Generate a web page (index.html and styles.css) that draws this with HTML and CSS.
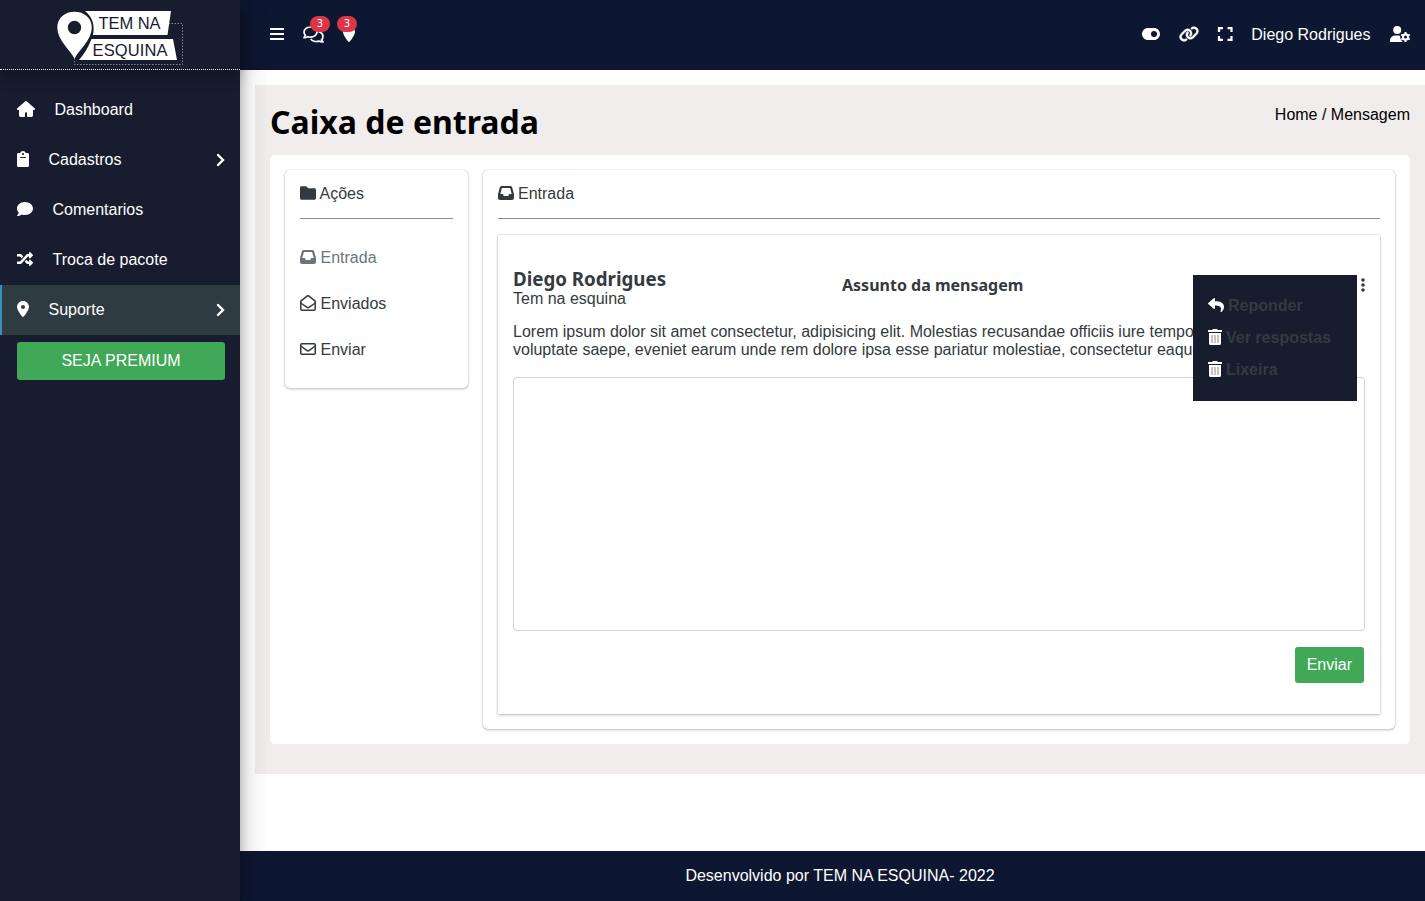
FILE: index.html
```html
<!DOCTYPE html>
<html lang="pt-br">
<head>
<meta charset="utf-8">
<title>Caixa de entrada</title>
<link rel="stylesheet" href="styles.css">
</head>
<body>
<aside class="sidebar">
  <a class="brand">
    <svg class="logo" width="240" height="69" viewBox="0 0 240 69">
      <path d="M74.500 58V64.500H182.500V23.500H169" fill="none" stroke="#82858f" stroke-width="1" stroke-dasharray="1.500 1.500"/>
      <path d="M85 11H171L167.500 35H93Q96 20 85 11ZM91.500 39H173L177 60H79Q87 51 91.500 39Z" fill="#fff"/>
      <path d="M74.500 58.500C70 50 57.300 40 57.300 27.500C57.300 18 65 11.800 74.500 11.800S91.800 18 91.800 27.500C91.800 40 79 50 74.500 58.500Z" fill="#fff"/>
      <circle cx="74.500" cy="27.500" r="6.700" fill="#171c2f"/>
      <text x="98.500" y="29" class="logo-text" textLength="62">TEM NA</text>
      <text x="92.500" y="56" class="logo-text" textLength="75">ESQUINA</text>
    </svg>
  </a>
  <nav class="menu">
    <a class="item"><svg height="16" width="18" viewBox="0 0 576 512"><path d="M575.800 255.500c0 18-15 32.100-32 32.100h-32l.7 160.200c0 35.300-21.500 64.200-56.700 64.200H352c-17.700 0-32-14.300-32-32v-88c0-17.700-14.300-32-32-32s-32 14.300-32 32v88c0 17.700-14.300 32-32 32H120c-35 0-56-24-56-56V287.600H32c-18 0-32-14-32-32.100 0-9 3-17 10-24L266.400 8c7-7 15-8 22-8s15 2 21 7l255.400 224.500c8 7 12 15 11 24z"/></svg><span>Dashboard</span></a>
    <a class="item"><svg height="16" width="12" viewBox="0 0 384 512"><path fill-rule="evenodd" d="M336 64h-53.900C270 27 235 0 192 0s-77 27-90 64H48C21.500 64 0 85.500 0 112v352c0 26.500 21.500 48 48 48h288c26.500 0 48-21.500 48-48V112c0-26.500-21.500-48-48-48zM192 64c18 0 32 14 32 32s-14 32-32 32-32-14-32-32 14-32 32-32zm80 160H112c-9 0-16-7-16-16s7-16 16-16h160c9 0 16 7 16 16s-7 16-16 16z"/></svg><span>Cadastros</span><svg class="chevron" width="10" height="16" viewBox="0 0 10 16"><path d="M2 3l5 5-5 5"/></svg></a>
    <a class="item"><svg height="16" width="16" viewBox="0 0 512 512"><path d="M256 32C114.600 32 0 125.100 0 240c0 49.600 21.400 95 57 130.700C44.500 421.100 2.700 466 2.200 466.500c-2.200 2.300-2.800 5.700-1.500 8.700S4.800 480 8 480c66.300 0 116-31.800 140.600-51.400 32.700 12.300 69 19.400 107.400 19.400 141.400 0 256-93.100 256-208S397.400 32 256 32z"/></svg><span>Comentarios</span></a>
    <a class="item"><svg height="16" width="16" viewBox="0 0 512 512"><path d="M504.971 359.029c9.373 9.373 9.373 24.569 0 33.941l-80 79.984c-15.010 15.010-40.971 4.490-40.971-16.971V416h-58.785a12.004 12.004 0 0 1-8.773-3.812l-70.556-75.596 53.333-57.143L352 336h32v-39.981c0-21.438 25.943-31.998 40.971-16.971l80 79.981zM12 176h84l52.781 56.551 53.333-57.143-70.556-75.596A11.999 11.999 0 0 0 122.785 96H12c-6.627 0-12 5.373-12 12v56c0 6.627 5.373 12 12 12zm372 0v39.984c0 21.460 25.961 31.980 40.971 16.971l80-79.984c9.373-9.373 9.373-24.569 0-33.941l-80-79.981C409.943 24.021 384 34.582 384 56.019V96h-58.785a12.004 12.004 0 0 0-8.773 3.812L96 336H12c-6.627 0-12 5.373-12 12v56c0 6.627 5.373 12 12 12h110.785c3.326 0 6.503-1.381 8.773-3.812L352 176h32z"/></svg><span>Troca de pacote</span></a>
    <a class="item active"><svg height="16" width="12" viewBox="0 0 384 512"><path fill-rule="evenodd" d="M215.700 499.200C267 435 384 279.400 384 192 384 86 298 0 192 0S0 86 0 192c0 87.400 117 243 168.300 307.200 12.300 15.300 35.100 15.300 47.400 0zM192 128a64 64 0 1 1 0 128 64 64 0 1 1 0-128z"/></svg><span>Suporte</span><svg class="chevron" width="10" height="16" viewBox="0 0 10 16"><path d="M2 3l5 5-5 5"/></svg></a>
  </nav>
  <button class="btn premium">SEJA PREMIUM</button>
</aside>
<header class="topbar">
  <div class="group">
    <svg class="bars" width="14" height="16" viewBox="0 0 14 16"><path d="M0 3h14M0 8h14M0 13h14" stroke="#fff" stroke-width="2"/></svg>
    <span class="notify chat"><svg width="21" height="17" viewBox="0 0 21 17"><g fill="#0e1731" stroke="#fff" stroke-width="1.700" stroke-linejoin="round"><path d="M11.500 5.200c4.500-.8 8.500 1.800 8.500 5.200 0 1.400-.6 2.500-1.500 3.400l1.500 2.200c-1.600.1-3-.3-4-.9-3.300 1-7 .1-8.200-2.300"/><path d="M7.500 1C3.800 1 1 3.300 1 6.100c0 1.300.5 2.400 1.400 3.300L1 11.700c1.600 0 2.800-.4 3.800-1 .9.300 1.700.4 2.700.4 3.700 0 6.500-2.200 6.500-5S11.200 1 7.500 1z"/></g></svg><b class="badge">3</b></span>
    <span class="notify pin"><svg height="16" width="12" viewBox="0 0 384 512"><path fill="#fff" d="M215.700 499.200C267 435 384 279.400 384 192 384 86 298 0 192 0S0 86 0 192c0 87.400 117 243 168.300 307.200 12.300 15.300 35.100 15.300 47.400 0z"/></svg><b class="badge">3</b></span>
  </div>
  <div class="group right">
    <svg width="18" height="16" viewBox="0 0 576 512"><path fill="#fff" fill-rule="evenodd" d="M384 64H192C86 64 0 150 0 256s86 192 192 192h192c106 0 192-86 192-192S490 64 384 64zm0 288a96 96 0 1 1 0-192 96 96 0 1 1 0 192z"/></svg>
    <svg class="link" width="20" height="16" viewBox="0 0 640 512"><path fill="#fff" stroke="#fff" stroke-width="14" d="M579.800 267.700c56.500-56.500 56.500-148 0-204.500-50-50-128.800-56.500-186.300-15.400l-1.600 1.100c-14.400 10.300-17.700 30.300-7.400 44.600s30.300 17.700 44.600 7.400l1.600-1.100c32.100-22.900 76-19.300 103.800 8.600 31.500 31.500 31.500 82.500 0 114L422.300 334.800c-31.500 31.500-82.500 31.500-114 0-27.900-27.900-31.500-71.800-8.600-103.800l1.100-1.600c10.300-14.400 6.900-34.400-7.400-44.600s-34.400-6.900-44.600 7.400l-1.100 1.600C206.500 251.200 213 330 263 380c56.500 56.500 148 56.500 204.500 0L579.800 267.700zM60.200 244.300c-56.500 56.500-56.500 148 0 204.500 50 50 128.800 56.500 186.300 15.400l1.600-1.100c14.400-10.300 17.700-30.300 7.400-44.600s-30.300-17.700-44.600-7.400l-1.600 1.100c-32.100 22.900-76 19.300-103.800-8.600C74 372 74 321 105.500 289.500L217.700 177.200c31.500-31.500 82.500-31.500 114 0 27.900 27.900 31.500 71.800 8.600 103.900l-1.100 1.600c-10.300 14.400-6.900 34.400 7.400 44.600s34.400 6.900 44.600-7.400l1.100-1.600C433.500 260.800 427 182 377 132c-56.500-56.500-148-56.500-204.500 0L60.200 244.300z"/></svg>
    <svg class="expand" width="16" height="16" viewBox="0 0 16 16"><path fill="none" stroke="#fff" stroke-width="2.200" d="M2 6V2.100h4M10.500 2.100h4V6M2 10v3.900h4M10.500 13.900h4V10"/></svg>
    <span class="user">Diego Rodrigues</span>
    <svg class="gear" width="21" height="16" viewBox="0 0 21 16"><circle cx="7.200" cy="4" r="4" fill="#fff"/><path fill="#fff" d="M0 16v-1.500C0 11.500 2.500 9.500 5.500 9.500h3.300c.8 0 1.500.2 2.200.5 0 2.500.5 4.500 2 6z"/><circle cx="15.500" cy="11" r="5.400" fill="#0e1731"/><circle cx="15.500" cy="11" r="2.600" fill="none" stroke="#fff" stroke-width="2.200"/><path stroke="#fff" stroke-width="2" d="M15.500 6v2M15.500 14v2M11.200 8.500l1.700 1M18.100 12.500l1.700 1M11.200 13.500l1.700-1M18.100 9.500l1.700-1"/></svg>
  </div>
</header>
<main class="content">
  <section class="page">
    <div class="page-head"><h1>Caixa de entrada</h1><div class="crumbs">Home / Mensagem</div></div>
    <div class="panel">
      <div class="card actions">
        <div class="card-title"><svg width="16" height="16" viewBox="0 0 16 16"><path d="M1.500 1.200h4.700l2 2h6.300c.8 0 1.500.7 1.500 1.500v8.600c0 .8-.7 1.500-1.500 1.500h-13C.700 14.800 0 14.100 0 13.300V2.700c0-.8.7-1.500 1.500-1.500z"/></svg><span>Ações</span></div>
        <ul class="folders">
          <li class="current"><svg width="16" height="16" viewBox="0 0 16 16"><path fill-rule="evenodd" d="M3.700 1h8.600c.9 0 1.700.6 1.900 1.500L16 9.200V13c0 1.100-.9 2-2 2H2c-1.100 0-2-.9-2-2V9.200l1.800-6.700C2 1.600 2.800 1 3.700 1zm.2 2L2.300 9h2.500l1 2h4.400l1-2h2.500l-1.600-6z"/></svg><span>Entrada</span></li>
          <li><svg width="16" height="16" viewBox="0 0 16 16"><g fill="none" stroke="#343a40" stroke-width="1.500" stroke-linejoin="round"><path d="M.8 6.200L7 1.100c.6-.5 1.400-.5 2 0l6.200 5.100v8c0 .6-.4 1-1 1H1.800c-.6 0-1-.4-1-1z"/><path d="M.8 8l5.900 4.200c.8.600 1.800.6 2.600 0L15.200 8"/></g></svg><span>Enviados</span></li>
          <li><svg width="16" height="16" viewBox="0 0 16 16"><g fill="none" stroke="#343a40" stroke-width="1.500"><rect x=".75" y="2.750" width="14.500" height="10.500" rx="1"/><path d="M.8 5l5.900 4.400c.8.600 1.800.6 2.600 0L15.200 5"/></g></svg><span>Enviar</span></li>
        </ul>
      </div>
      <div class="card inbox">
        <div class="card-title"><svg class="tray" width="16" height="16" viewBox="0 0 16 16"><path fill-rule="evenodd" d="M3.700 1h8.600c.9 0 1.700.6 1.900 1.500L16 9.200V13c0 1.100-.9 2-2 2H2c-1.100 0-2-.9-2-2V9.200l1.800-6.700C2 1.600 2.800 1 3.700 1zm.2 2L2.300 9h2.500l1 2h4.400l1-2h2.500l-1.600-6z"/></svg><span class="wide">Entrada</span></div>
        <article class="message">
          <div class="message-head">
            <div class="sender"><h2>Diego Rodrigues</h2><div>Tem na esquina</div></div>
            <h3>Assunto da mensagem</h3>
            <div class="more"><svg width="4" height="14" viewBox="0 0 4 14"><circle cx="2" cy="2" r="1.800"/><circle cx="2" cy="7" r="1.800"/><circle cx="2" cy="12" r="1.800"/></svg>
              <div class="dropdown">
                <a><svg width="16" height="16" viewBox="0 0 512 512"><path d="M8.300 189.800L184.300 37.900C199.700 24.500 224 35.300 224 56v80c160.600 1.800 288 34 288 186.300 0 61.400-39.600 122.300-83.300 154.100-13.700 9.900-33.100-2.500-28.100-18.600C445.900 312.800 379.100 274.300 224 272v88c0 20.700-24.300 31.500-39.700 18.200L8.300 226.200c-11.100-9.600-11.100-26.800 0-36.400z"/></svg><span>Reponder</span></a>
                <a><svg width="14" height="16" viewBox="0 0 14 16"><path d="M0 1h4l1-1h4l1 1h4v2H0z"/><path d="M1 4h12v10.500c0 .8-.7 1.500-1.500 1.500h-9C1.700 16 1 15.300 1 14.500z"/><path d="M4 6v8M7 6v8M10 6v8" stroke="#8f8a85"/></svg><span>Ver respostas</span></a>
                <a><svg width="14" height="16" viewBox="0 0 14 16"><path d="M0 1h4l1-1h4l1 1h4v2H0z"/><path d="M1 4h12v10.500c0 .8-.7 1.500-1.500 1.500h-9C1.700 16 1 15.300 1 14.500z"/><path d="M4 6v8M7 6v8M10 6v8" stroke="#8f8a85"/></svg><span>Lixeira</span></a>
              </div>
            </div>
          </div>
          <p>Lorem ipsum dolor sit amet consectetur, adipisicing elit. Molestias recusandae officiis iure tempore<br>voluptate saepe, eveniet earum unde rem dolore ipsa esse pariatur molestiae, consectetur eaque</p>
          <textarea></textarea>
          <div class="send"><button class="btn">Enviar</button></div>
        </article>
      </div>
    </div>
  </section>
</main>
<footer class="footer">Desenvolvido por TEM NA ESQUINA- 2022</footer>
</body>
</html>
```
FILE: styles.css
```css
* { box-sizing: border-box; }
body {
  margin: 0;
  height: 901px;
  display: grid;
  grid-template: 70px 1fr 50px / 240px 1fr;
  overflow: hidden;
  background: #fff;
  color: #343a40;
  font: 16px/18px "Liberation Sans", Arial, sans-serif;
}
svg { display: block; flex: none; }
h1, h2, h3, p, ul { margin: 0; padding: 0; }
.sidebar {
  grid-row: 1 / 4;
  position: relative;
  z-index: 2;
  background: #171c2f;
  color: #fff;
  box-shadow: 0 14px 28px rgba(0,0,0,.25), 0 10px 10px rgba(0,0,0,.22);
}
.brand {
  display: block;
  height: 70px;
  border-bottom: 1px dotted #fff;
  box-shadow: 0 8px 14px rgba(0,0,0,.22);
}
.logo-text { font-size: 16.5px; fill: #171c2f; }
.menu { padding-top: 15px; }
.item {
  display: flex;
  align-items: center;
  height: 50px;
  padding: 0 14px 0 14.5px;
  border-left: 2px solid transparent;
  fill: #fff;
}
.item > svg:first-child { margin-bottom: 2px; }
.item span { margin-left: 20px; }
.item.active { background: #2e3b41; border-color: #3c8dbc; }
.chevron { margin-left: auto; fill: none; stroke: #fff; stroke-width: 2.4; stroke-linecap: round; }
.btn {
  height: 36px;
  padding: 0 12px;
  border: 0;
  border-radius: 3px;
  background: #40a857;
  color: #fff;
  font: inherit;
}
.premium { display: block; width: 208px; height: 38px; margin: 7px 0 0 17px; }
.topbar {
  display: flex;
  justify-content: space-between;
  padding: 0 14.5px 2px 30px;
  background: #0e1731;
  color: #fff;
}
.group { display: flex; align-items: center; }
.notify { position: relative; }
.chat, .pin { margin-left: 19px; }
.badge {
  position: absolute;
  left: 7px;
  top: -10px;
  width: 20px;
  height: 16px;
  border-radius: 8px;
  background: #dc3545;
  font: 10px/16px "DejaVu Sans", sans-serif;
  text-align: center;
}
.chat .badge { top: -9.5px; }
.pin .badge { left: -6px; }
.link { margin-left: 19px; }
.expand { margin-left: 18.5px; }
.user { margin: 0 19px 0 18px; padding-top: 2px; }
.page { margin: 15px 0 0 15px; padding: 15px; height: 689px; background: #f1eded; }
.page-head { display: flex; justify-content: space-between; height: 55px; color: #000; }
h1 { font: bold 32px/44px "Noto Sans", sans-serif; }
.crumbs { padding-top: 6px; }
.panel {
  display: grid;
  grid-template-columns: 183px 1fr;
  align-items: start;
  gap: 15px;
  padding: 15px;
  height: 589px;
  border-radius: 5px;
  background: #fff;
}
.card {
  padding: 15px;
  border-radius: 5px;
  background: #fff;
  box-shadow: 0 0 1px rgba(0,0,0,.25), 0 1px 3px rgba(0,0,0,.25);
}
.actions { height: 218px; }
.inbox { height: 559px; }
.card-title {
  display: flex;
  align-items: center;
  height: 34px;
  padding-bottom: 16px;
  border-bottom: 1px solid #8d8d8d;
  fill: #343a40;
}
.card-title svg { margin-bottom: 2px; }
.card-title span { margin-left: 3.5px; }
.card-title .tray { margin-left: -.5px; }
.card-title .wide { margin-left: 4.5px; }
.folders { display: grid; gap: 28px; padding-top: 30px; list-style: none; }
.folders li { display: flex; align-items: center; gap: 4.5px; }
.folders svg { margin-bottom: 2px; }
.current { fill: #6c757d; color: #6c757d; }
.message {
  height: 479px;
  margin-top: 16px;
  padding: 33px 15px 0;
  box-shadow: 0 0 1px rgba(0,0,0,.25), 0 1px 3px rgba(0,0,0,.25);
}
.message-head { display: grid; grid-template-columns: 329px 182px 1fr; }
h2 { font: bold 18.72px/22px "Noto Sans", sans-serif; }
h3 { padding-top: 7px; font: bold 16px/20px "Noto Sans", sans-serif; white-space: nowrap; }
.more { position: relative; justify-self: end; padding-top: 10px; fill: #343a40; }
.dropdown {
  position: absolute;
  top: 7px;
  right: 8px;
  z-index: 1;
  display: grid;
  gap: 14px;
  align-content: start;
  width: 164px;
  height: 126px;
  padding: 22px 14.5px;
  background: #171c2f;
  font-weight: bold;
}
.dropdown a { display: flex; align-items: center; gap: 4.5px; fill: #fff; white-space: nowrap; }
.dropdown svg { margin-bottom: 2px; }
.message p { padding-top: 15px; white-space: nowrap; }
textarea {
  display: block;
  width: 100%;
  height: 254px;
  margin-top: 18px;
  border: 1px solid #ced4da;
  border-radius: 4px;
  resize: none;
}
.send { display: flex; justify-content: flex-end; padding: 16px 1px 0; }
.footer { display: flex; align-items: center; justify-content: center; padding-left: 15px; background: #0e1731; color: #fff; }
```
